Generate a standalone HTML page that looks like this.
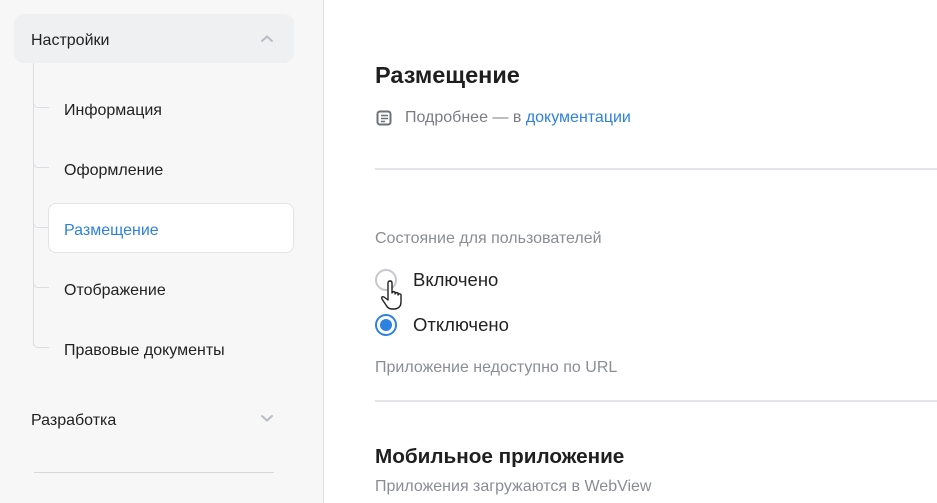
<!DOCTYPE html>
<html><head><meta charset="utf-8"><style>
*{margin:0;padding:0;box-sizing:border-box}
body{width:937px;height:503px;overflow:hidden;background:#fff;font-family:"Liberation Sans",sans-serif;position:relative;color:#222}
.sb{position:absolute;left:0;top:0;width:324px;height:503px;background:#f7f7f8;border-right:1px solid #e4e4e7}
.t{position:absolute;font-size:16px;color:#222}
.hd{position:absolute;left:14px;top:14px;width:280px;height:49px;background:#eff0f2;border-radius:10px}
.vl{position:absolute;left:33px;top:63px;width:1px;height:283px;background:#dcdde0}
.br{position:absolute;left:33px;width:16px;height:6px;border-left:1px solid #dcdde0;border-bottom:1px solid #dcdde0;border-bottom-left-radius:5px}
.sel{position:absolute;left:48px;top:203px;width:246px;height:50px;background:#fff;border:1px solid #e2e3e6;border-radius:8px}
.m{position:absolute;font-size:16px}
</style></head><body>
<div class="sb">
<div class="hd"></div>
<div class="t" style="left:31px;top:32px">Настройки</div>
<svg style="position:absolute;left:260px;top:34px" width="14" height="10"><path d="M2 7 L7 2.5 L12 7" stroke="#b8bcc4" stroke-width="2" fill="none" stroke-linecap="round"/></svg>
<div class="vl"></div>
<div class="br" style="top:102px"></div>
<div class="br" style="top:162px"></div>
<div class="br" style="top:222px"></div>
<div class="br" style="top:282px"></div>
<div class="br" style="top:342px"></div>
<div class="sel"></div>
<div class="t" style="left:64px;top:102px">Информация</div>
<div class="t" style="left:64px;top:162px">Оформление</div>
<div class="t" style="left:64px;top:222px;color:#2d81e0">Размещение</div>
<div class="t" style="left:64px;top:282px">Отображение</div>
<div class="t" style="left:64px;top:342px">Правовые документы</div>
<div class="t" style="left:31px;top:412px">Разработка</div>
<svg style="position:absolute;left:260px;top:413px" width="14" height="10"><path d="M2 3 L7 7.5 L12 3" stroke="#b8bcc4" stroke-width="2" fill="none" stroke-linecap="round"/></svg>
<div style="position:absolute;left:34px;top:472px;width:240px;height:1px;background:#d6d7da"></div>
</div>
<div class="m" style="left:375px;top:62px;font-size:23.5px;font-weight:bold;color:#1f1f1f">Размещение</div>
<svg style="position:absolute;left:376px;top:110px" width="17" height="16"><rect x="1.5" y="1.5" width="13" height="13" rx="2.5" stroke="#6d7077" stroke-width="2" fill="none"/><path d="M5 5.5h7M5 8.5h7M5 11.5h4" stroke="#6d7077" stroke-width="1.5"/></svg>
<div class="m" style="left:405px;top:109px;color:#7a7d84">Подробнее — в <span style="color:#2d81e0">документации</span></div>
<div style="position:absolute;left:375px;top:168px;width:562px;height:2px;background:#e4e5e8"></div>
<div class="m" style="left:375px;top:230px;color:#8a8d93">Состояние для пользователей</div>
<div style="position:absolute;left:375px;top:269px;width:22px;height:22px;border:2px solid #c5c8cd;border-radius:50%"></div>
<div class="m" style="left:413px;top:269px;font-size:18.5px">Включено</div>
<div style="position:absolute;left:375px;top:314px;width:22px;height:22px;border:2px solid #2d81e0;border-radius:50%;background:#fff"><div style="position:absolute;left:3px;top:3px;width:12px;height:12px;border-radius:50%;background:#2d81e0"></div></div>
<svg style="position:absolute;left:380px;top:280px" width="26" height="32"><path d="M8 3 Q8 1 10 1 Q12 1 12 3 V13 Q13 11 15 12 L15 14 Q16 12 18 13 L18 15 Q19 13 21 14.5 V22 Q21 28 15 29 H12 Q8 29 6 25 L2 19 Q1 16 4 17 L8 20 Z" fill="#fff" stroke="#222" stroke-width="1.4" stroke-linejoin="round"/></svg>
<div class="m" style="left:413px;top:314px;font-size:18.5px">Отключено</div>
<div class="m" style="left:375px;top:359px;color:#8a8d93">Приложение недоступно по URL</div>
<div style="position:absolute;left:375px;top:400px;width:562px;height:2px;background:#e4e5e8"></div>
<div class="m" style="left:375px;top:445px;font-size:20.7px;font-weight:bold;color:#1f1f1f">Мобильное приложение</div>
<div class="m" style="left:375px;top:478px;color:#8a8d93">Приложения загружаются в WebView</div>
</body></html>
